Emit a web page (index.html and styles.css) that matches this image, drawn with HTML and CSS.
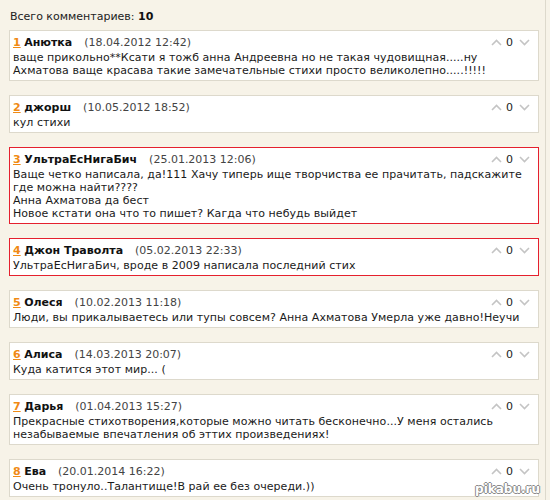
FILE: index.html
```html
<!DOCTYPE html>
<html lang="ru">
<head>
<meta charset="utf-8">
<title>Комментарии</title>
<link rel="stylesheet" href="styles.css">
</head>
<body>
<div class="page">
  <div class="total">Всего комментариев: <b>10</b></div>

  <div class="comment">
    <div class="head">
      <span class="vote"><svg class="chev" viewBox="0 0 11 7"><polyline points="1,6 5.5,1.5 10,6"/></svg><span class="score">0</span><svg class="chev" viewBox="0 0 11 7"><polyline points="1,1 5.5,5.5 10,1"/></svg></span>
      <a class="num" href="#">1</a> <span class="name">Анютка</span><span class="date">(18.04.2012 12:42)</span>
    </div>
    <div class="text">ваще прикольно**Ксати я тожб анна Андреевна но не такая чудовищная.....ну<br>Ахматова ваще красава такие замечательные стихи просто великолепно.....!!!!!</div>
  </div>

  <div class="comment">
    <div class="head">
      <span class="vote"><svg class="chev" viewBox="0 0 11 7"><polyline points="1,6 5.5,1.5 10,6"/></svg><span class="score">0</span><svg class="chev" viewBox="0 0 11 7"><polyline points="1,1 5.5,5.5 10,1"/></svg></span>
      <a class="num" href="#">2</a> <span class="name">джорш</span><span class="date">(10.05.2012 18:52)</span>
    </div>
    <div class="text">кул стихи</div>
  </div>

  <div class="comment marked">
    <div class="head">
      <span class="vote"><svg class="chev" viewBox="0 0 11 7"><polyline points="1,6 5.5,1.5 10,6"/></svg><span class="score">0</span><svg class="chev" viewBox="0 0 11 7"><polyline points="1,1 5.5,5.5 10,1"/></svg></span>
      <a class="num" href="#">3</a> <span class="name">УльтраЕсНигаБич</span><span class="date">(25.01.2013 12:06)</span>
    </div>
    <div class="text">Ваще четко написала, да!111 Хачу типерь ище творчиства ее прачитать, падскажите<br>где можна найти????<br>Анна Ахматова да бест<br>Новое кстати она что то пишет? Кагда что небудь выйдет</div>
  </div>

  <div class="comment marked">
    <div class="head">
      <span class="vote"><svg class="chev" viewBox="0 0 11 7"><polyline points="1,6 5.5,1.5 10,6"/></svg><span class="score">0</span><svg class="chev" viewBox="0 0 11 7"><polyline points="1,1 5.5,5.5 10,1"/></svg></span>
      <a class="num" href="#">4</a> <span class="name">Джон Траволта</span><span class="date">(05.02.2013 22:33)</span>
    </div>
    <div class="text">УльтраЕсНигаБич, вроде в 2009 написала последний стих</div>
  </div>

  <div class="comment">
    <div class="head">
      <span class="vote"><svg class="chev" viewBox="0 0 11 7"><polyline points="1,6 5.5,1.5 10,6"/></svg><span class="score">0</span><svg class="chev" viewBox="0 0 11 7"><polyline points="1,1 5.5,5.5 10,1"/></svg></span>
      <a class="num" href="#">5</a> <span class="name">Олеся</span><span class="date">(10.02.2013 11:18)</span>
    </div>
    <div class="text">Люди, вы прикалываетесь или тупы совсем? Анна Ахматова Умерла уже давно!Неучи</div>
  </div>

  <div class="comment">
    <div class="head">
      <span class="vote"><svg class="chev" viewBox="0 0 11 7"><polyline points="1,6 5.5,1.5 10,6"/></svg><span class="score">0</span><svg class="chev" viewBox="0 0 11 7"><polyline points="1,1 5.5,5.5 10,1"/></svg></span>
      <a class="num" href="#">6</a> <span class="name">Алиса</span><span class="date">(14.03.2013 20:07)</span>
    </div>
    <div class="text">Куда катится этот мир... (</div>
  </div>

  <div class="comment">
    <div class="head">
      <span class="vote"><svg class="chev" viewBox="0 0 11 7"><polyline points="1,6 5.5,1.5 10,6"/></svg><span class="score">0</span><svg class="chev" viewBox="0 0 11 7"><polyline points="1,1 5.5,5.5 10,1"/></svg></span>
      <a class="num" href="#">7</a> <span class="name">Дарья</span><span class="date">(01.04.2013 15:27)</span>
    </div>
    <div class="text">Прекрасные стихотворения,которые можно читать бесконечно...У меня остались<br>незабываемые впечатления об эттих произведениях!</div>
  </div>

  <div class="comment">
    <div class="head">
      <span class="vote"><svg class="chev" viewBox="0 0 11 7"><polyline points="1,6 5.5,1.5 10,6"/></svg><span class="score">0</span><svg class="chev" viewBox="0 0 11 7"><polyline points="1,1 5.5,5.5 10,1"/></svg></span>
      <a class="num" href="#">8</a> <span class="name">Ева</span><span class="date">(20.01.2014 16:22)</span>
    </div>
    <div class="text">Очень тронуло..Талантище!В рай ее без очереди.))</div>
  </div>

  <div class="watermark">pikabu.ru</div>
</div>
</body>
</html>
```
FILE: styles.css
```css
html, body {
  margin: 0;
  padding: 0;
  background: #f7f3e8;
  height: 100%;
  overflow: hidden;
}
.page {
  width: 530px;
  height: 490px;
  padding: 10px 6px 0 9px;
  border-right: 1px solid #ddd9cc;
  font-family: "DejaVu Sans", Verdana, sans-serif;
  font-size: 11px;
  color: #1a1a1a;
  position: relative;
  box-sizing: content-box;
}
.total {
  line-height: 14px;
  margin-bottom: 6px;
  padding-left: 1px;
  color: #222;
}
.total b {
  font-weight: bold;
  color: #111;
}
.comment {
  background: #fff;
  border: 1px solid #ddd9cc;
  padding: 3px 8px 3px 3px;
  margin-bottom: 14px;
}
.comment.marked {
  border-color: #e5202e;
}
.head {
  height: 17px;
  line-height: 17px;
}
.num {
  color: #f08a14;
  font-weight: bold;
  text-decoration: underline;
}
.name {
  font-weight: bold;
  color: #111;
}
.date {
  color: #444;
  margin-left: 12px;
}
.vote {
  float: right;
  display: flex;
  align-items: center;
  height: 17px;
}
.chev {
  width: 11px;
  height: 7px;
  fill: none;
  stroke: #c4c4c4;
  stroke-width: 1.6;
}
.score {
  color: #222;
  margin: 0 6px 0 4px;
}
.text {
  line-height: 13px;
  letter-spacing: 0.05px;
  color: #1a1a1a;
}
.watermark {
  position: absolute;
  right: 5px;
  bottom: 4px;
  line-height: 14px;
  font-family: "DejaVu Sans", sans-serif;
  font-weight: bold;
  font-size: 12px;
  color: #fff;
  text-shadow: -1px 0 #888, 1px 0 #888, 0 -1px #888, 0 1px #888;
}
```
